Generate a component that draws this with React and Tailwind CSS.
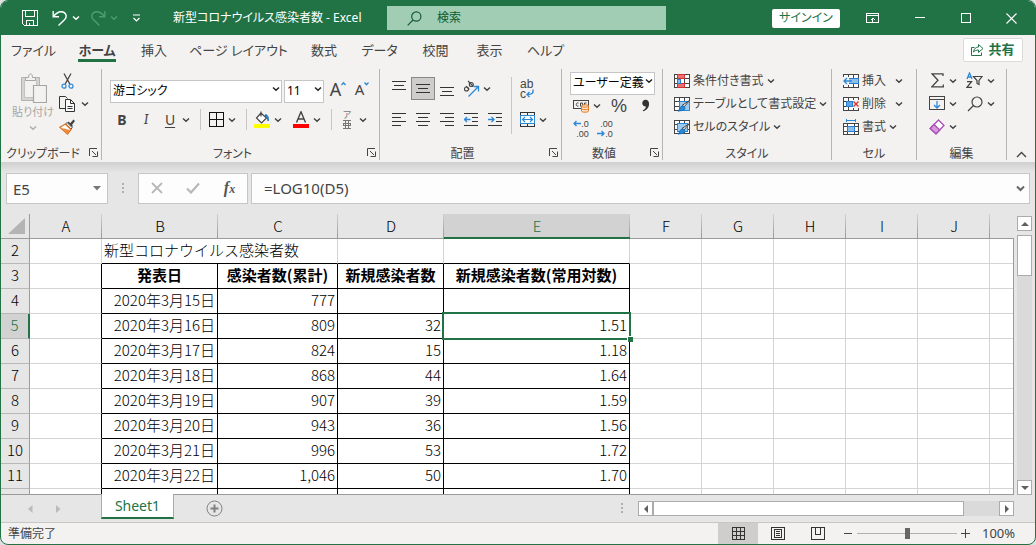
import { useState } from 'react';
import clsx from 'clsx';

const menuTabs = [
  { label: 'ファイル', width: 'w-[65px]' },
  { label: 'ホーム', width: 'w-[62px]', active: true },
  { label: '挿入', width: 'w-[52px]' },
  { label: 'ページ レイアウト', width: 'w-[117px]' },
  { label: '数式', width: 'w-[54px]' },
  { label: 'データ', width: 'w-[57px]' },
  { label: '校閲', width: 'w-[55px]' },
  { label: '表示', width: 'w-[53px]' },
  { label: 'ヘルプ', width: 'w-[59px]' },
];

const columns = [
  { name: 'A', width: 'w-[72px]' },
  { name: 'B', width: 'w-[116px]' },
  { name: 'C', width: 'w-[120px]' },
  { name: 'D', width: 'w-[106px]' },
  { name: 'E', width: 'w-[186px]' },
  { name: 'F', width: 'w-[72px]' },
  { name: 'G', width: 'w-[72px]' },
  { name: 'H', width: 'w-[72px]' },
  { name: 'I', width: 'w-[72px]' },
  { name: 'J', width: 'w-[72px]' },
];

const records = [
  { row: 4, date: '2020年3月15日', total: '777', added: '', log: '' },
  { row: 5, date: '2020年3月16日', total: '809', added: '32', log: '1.51' },
  { row: 6, date: '2020年3月17日', total: '824', added: '15', log: '1.18' },
  { row: 7, date: '2020年3月18日', total: '868', added: '44', log: '1.64' },
  { row: 8, date: '2020年3月19日', total: '907', added: '39', log: '1.59' },
  { row: 9, date: '2020年3月20日', total: '943', added: '36', log: '1.56' },
  { row: 10, date: '2020年3月21日', total: '996', added: '53', log: '1.72' },
  { row: 11, date: '2020年3月22日', total: '1,046', added: '50', log: '1.70' },
  { row: 12, date: '', total: '', added: '', log: '' },
];

function Svg({ w = 16, h = 16, children, ...rest }) {
  return (
    <svg width={w} height={h} viewBox={`0 0 ${w} ${h}`} fill="none" stroke="#444" className="shrink-0" aria-hidden="true" {...rest}>
      {children}
    </svg>
  );
}

function Chevron({ color = '#444' }) {
  return (
    <Svg w={8} h={6} stroke={color} strokeWidth="1.5">
      <path d="M1 1.5 4 4.2 7 1.5" />
    </Svg>
  );
}

function IconButton({ label, children, active, className }) {
  return (
    <button
      type="button"
      aria-label={label}
      className={clsx(
        'flex h-[23px] w-6 shrink-0 items-center justify-center',
        active && 'border border-[#8a8886] bg-[#cfcdcb]',
        className,
      )}
    >
      {children}
    </button>
  );
}

function SplitButton({ label, children }) {
  return (
    <div className="flex shrink-0">
      <IconButton label={label}>{children}</IconButton>
      <button type="button" aria-label={`${label} メニュー`} className="flex h-[23px] w-3 items-center">
        <Chevron />
      </button>
    </div>
  );
}

function TextCommand({ label, icon, wide }) {
  return (
    <button type="button" className="flex h-[23px] items-center gap-[3px] whitespace-nowrap">
      {icon}
      <span>{label}</span>
      <span className={clsx(wide && 'ml-1.5')}>
        <Chevron />
      </span>
    </button>
  );
}

function Combo({ label, value, className }) {
  return (
    <div className={clsx('relative h-[23px] shrink-0', className)}>
      <select
        aria-label={label}
        defaultValue={value}
        className="h-full w-full appearance-none border border-[#c6c6c6] bg-white pl-0.5 text-xs leading-5 text-black"
      >
        <option>{value}</option>
      </select>
      <span className="pointer-events-none absolute inset-y-0 right-0.5 flex items-center">
        <Chevron color="#222" />
      </span>
    </div>
  );
}

function Launcher({ label }) {
  return (
    <button type="button" aria-label={label} className="flex w-4 items-center justify-center">
      <Svg w={9} h={9}>
        <path d="M.5 8V.5H8M3 3l4 4M8.5 3.5v5h-5" />
      </Svg>
    </button>
  );
}

function Group({ title, className, launcher, children }) {
  return (
    <section aria-label={title} className={clsx('flex h-[91px] shrink-0 flex-col border-r border-[#b8b6b4]', className)}>
      <div className="flex-1">{children}</div>
      <div className="flex h-4 text-xs leading-5">
        <span className="flex-1 text-center">{title}</span>
        {launcher && <Launcher label={`${title}の設定`} />}
      </div>
    </section>
  );
}

function Divider() {
  return <span className="mr-[3px] ml-1.5 h-[21px] w-px bg-[#c8c6c4]" />;
}

function Lines({ rows, y = 1 }) {
  return (
    <Svg w={15} h={15} stroke="#333" shapeRendering="crispEdges">
      {rows.map(([x, len], i) => (
        <path key={i} d={`M${x} ${y + i * 4 + 0.5}h${len}`} />
      ))}
    </Svg>
  );
}

/* ---- title bar ---- */

function TitleBar() {
  return (
    <header className="flex h-[34px] shrink-0 items-center bg-[#217346] text-white">
      <div className="flex items-center pl-[21px]">
        <button type="button" aria-label="上書き保存">
          <Svg stroke="#fff" shapeRendering="crispEdges">
            <path d="M.5.5h15v15H2.5l-2-2zM3.5.5v6h9v-6M4.5 15.5v-5h7v5M7.5 13v2.5" />
          </Svg>
        </button>
        <button type="button" aria-label="元に戻す" className="ml-3.5 flex items-center gap-1">
          <Svg stroke="#fff" strokeWidth="1.4">
            <path d="M1.2 1v5.8H7M1.5 6.5C4 3.2 6.5 1.5 9.5 1.7c4.6.3 6 4.7 3.2 7.8L6.5 15.5" />
          </Svg>
          <Chevron color="#fff" />
        </button>
        <button type="button" aria-label="やり直し" disabled className="ml-2.5 flex items-center gap-1">
          <Svg stroke="#4f9a70" strokeWidth="1.4">
            <path d="M14.8 1v5.8H9M14.5 6.5C12 3.2 9.5 1.5 6.5 1.7 1.9 2 .5 6.4 3.3 9.5l6.2 6" />
          </Svg>
          <Chevron color="#4f9a70" />
        </button>
        <button type="button" aria-label="クイック アクセス ツール バーのユーザー設定" className="ml-3.5">
          <Svg w={9} h={8} stroke="#fff" strokeWidth="1.2">
            <path d="M1 1h7M1.5 4l3 3 3-3" />
          </Svg>
        </button>
      </div>
      <h1 className="ml-8 w-[214px] text-xs whitespace-nowrap">新型コロナウイルス感染者数 - Excel</h1>
      <label className="flex h-6 w-[279px] items-center gap-[15px] bg-[#a0cdb4] pl-5">
        <Svg w={15} h={15} stroke="#185c37" strokeWidth="1.2">
          <circle cx="9.3" cy="5.5" r="4.6" />
          <path d="M6 9 .7 14.3" />
        </Svg>
        <input
          type="text"
          aria-label="検索"
          placeholder="検索"
          className="min-w-0 flex-1 bg-transparent text-xs text-[#0e5c2f] outline-none placeholder:text-[#0e5c2f]"
        />
      </label>
      <div className="ml-auto flex items-center">
        <button type="button" className="h-[19px] w-[68px] rounded-xs bg-white text-xs leading-[18px] text-[#217346]">
          サインイン
        </button>
        <button type="button" aria-label="リボンの表示オプション" className="ml-5 flex w-6 justify-center">
          <Svg w={13} h={10} stroke="#fff" shapeRendering="crispEdges">
            <path d="M.5.5h12v9H.5zM.5 2.5h12M6.5 9V4.5M4.5 6.5h1M7.5 6.5h1M5.5 5.5h2" />
          </Svg>
        </button>
        <button type="button" aria-label="最小化" className="flex w-[46px] justify-end pr-[5px]">
          <Svg w={10} h={10} stroke="#fff" shapeRendering="crispEdges">
            <path d="M0 4.5h10" />
          </Svg>
        </button>
        <button type="button" aria-label="最大化" className="flex w-[46px] justify-end pr-[5px]">
          <Svg w={10} h={10} stroke="#fff" shapeRendering="crispEdges">
            <path d="M.5.5h9v9h-9z" />
          </Svg>
        </button>
        <button type="button" aria-label="閉じる" className="mr-[13px] flex w-[46px] justify-end pr-[5px]">
          <Svg w={11} h={11} stroke="#fff" strokeWidth="1.1">
            <path d="m.5.5 10 10M10.5.5l-10 10" />
          </Svg>
        </button>
      </div>
    </header>
  );
}

function MenuTabs() {
  return (
    <nav className="flex h-[33px] shrink-0 items-center text-[13px]">
      {menuTabs.map((tab) => (
        <button
          key={tab.label}
          type="button"
          className={clsx('flex h-full shrink-0 justify-center pt-1.5 leading-[18px] whitespace-nowrap', tab.width)}
        >
          <span className={clsx('h-[21px]', tab.active && 'border-b-[3px] border-[#217346] font-bold')}>{tab.label}</span>
        </button>
      ))}
      <button
        type="button"
        className="mr-3 mb-1 ml-auto flex h-6 w-[60px] items-center justify-center gap-1 rounded-xs border border-[#dcdad8] bg-white font-bold text-[#217346]"
      >
        <Svg w={13} h={13} stroke="#217346">
          <path d="M3.5 4.5h-3v8h10v-3M2.5 9C3 5.5 5 4 7.5 4V1.5l4.5 4-4.5 4V7C5.5 7 4 7.5 2.5 9z" />
        </Svg>
        共有
      </button>
    </nav>
  );
}

/* ---- ribbon groups ---- */

function ClipboardGroup() {
  return (
    <Group title="クリップボード" launcher className="w-[101px]">
      <div className="flex">
        <button type="button" disabled className="flex w-[58px] flex-col items-center pt-1 pl-1.5 text-[11px] leading-[18px] whitespace-nowrap text-[#a8a6a4]">
          <Svg w={27} h={30} stroke="#a8a6a4">
            <path d="M1.5 4.5h18v23h-18z" fill="#d6d4d2" stroke="#b4b2b0" />
            <path d="M4.5 7.5h12v17h-12z" fill="#f3f2f1" stroke="#c4c2c0" />
            <path d="M5.5 7.5v-3h3c0-5 4-5 4 0h3v3z" fill="#f3f1ef" />
            <path d="M13.5 12.5h13v17h-13z" fill="#f3f2f1" strokeWidth="1.2" />
          </Svg>
          貼り付け
          <span className="pt-1">
            <Chevron color="#b0aeac" />
          </span>
        </button>
        <div className="flex flex-col">
          <button type="button" aria-label="切り取り" className="flex h-[23px] items-center pl-0.5">
            <Svg w={13} h={16}>
              <path d="m3 .5 5.8 10.5M10 .5 4.2 11" strokeWidth="1.3" />
              <circle cx="3" cy="13.2" r="2" stroke="#2b88d8" strokeWidth="1.2" />
              <circle cx="10" cy="13.2" r="2" stroke="#2b88d8" strokeWidth="1.2" />
            </Svg>
          </button>
          <button type="button" aria-label="コピー" className="flex h-[23px] items-center gap-1.5">
            <Svg stroke="#333">
              <path d="M6.5 12.5h-6V.5h6l2 2" />
              <path d="M6.5 3.5h5l4 4v8h-9zM11.5 3.5v4h4M8.5 10.5h5M8.5 12.5h5" fill="#fafafa" />
            </Svg>
            <Chevron />
          </button>
          <button type="button" aria-label="書式のコピー" className="flex h-6 items-center">
            <Svg>
              <path d="m15 1-3.5 4M9 3l4.5 4.5M15.5 1.5 12 6" strokeWidth="1.5" />
              <path d="m8 3.5 5.2 5.2-1.2 1.3-5.2-5.2z" fill="#fff" />
              <path d="M6.5 5 12 10.5 8.5 15 .8 8.2z" fill="#fff" stroke="#e07020" strokeWidth="1.3" />
              <path d="m5 9.5 6 1.5-2.5 3.8L3 9.3z" fill="#f08a3c" stroke="none" />
            </Svg>
          </button>
        </div>
      </div>
    </Group>
  );
}

function FontGroup() {
  return (
    <Group title="フォント" launcher className="w-[278px]">
      <div className="flex flex-col gap-2 px-2 pt-2">
        <div className="flex gap-0.5">
          <Combo label="フォント" value="游ゴシック" className="w-[172px]" />
          <Combo label="フォント サイズ" value="11" className="w-10" />
          <div className="flex">
            <IconButton label="フォント サイズの拡大">
              <span className="text-lg leading-5">A</span>
              <Svg w={5} h={16} stroke="#2b88d8" strokeWidth="1.3">
                <path d="m.5 4 2-2.2 2 2.2" />
              </Svg>
            </IconButton>
            <IconButton label="フォント サイズの縮小">
              <span className="text-[15px] leading-5">A</span>
              <Svg w={5} h={16} stroke="#2b88d8" strokeWidth="1.3">
                <path d="m.5 1.5 2 2.2 2-2.2" />
              </Svg>
            </IconButton>
          </div>
        </div>
        <div className="flex items-center text-sm">
          <IconButton label="太字" className="font-bold">B</IconButton>
          <IconButton label="斜体" className="font-serif italic">I</IconButton>
          <SplitButton label="下線">
            <span className="underline underline-offset-2">U</span>
          </SplitButton>
          <Divider />
          <SplitButton label="罫線">
            <Svg w={15} h={15} stroke="#111" shapeRendering="crispEdges">
              <path d="M.5.5h14v14H.5zM7.5 0v15M0 7.5h15" />
            </Svg>
          </SplitButton>
          <Divider />
          <div className="flex gap-[3px]">
            <SplitButton label="塗りつぶしの色">
              <Svg h={17}>
                <path d="M7 2 2.5 7l5 5 5-5L7 2zM7 .5v5" fill="#fff" strokeWidth="1.2" />
                <path d="M11.5 3.5c2.5.5 3.2 3 2.7 6.5-.4-2-1.2-3.500-2.700-4z" fill="#2b88d8" stroke="#1b6fb8" />
                <path d="M0 13h16v4H0z" fill="#ff0" stroke="none" />
              </Svg>
            </SplitButton>
            <SplitButton label="フォントの色">
              <Svg h={17}>
                <path d="M3.5 11.5 8 .8l4.5 10.7M5 8h6" strokeWidth="1.4" />
                <path d="M0 13h16v4H0z" fill="#f00" stroke="none" />
              </Svg>
            </SplitButton>
          </div>
          <Divider />
          <SplitButton label="ふりがな">
            <span className="flex flex-col items-center text-[9px] leading-[10px] text-[#777]">
              <span>ア</span>
              <Svg w={8} h={9} stroke="#777" shapeRendering="crispEdges">
                <path d="M0 .5h8M2.5 1v7M5.5 1v7M.5 3.5h7v2h-7zM0 8.5h8" />
              </Svg>
            </span>
          </SplitButton>
        </div>
      </div>
    </Group>
  );
}

function AlignmentGroup() {
  const full = [0, 14];
  return (
    <Group title="配置" launcher className="w-[182px]">
      <div className="flex pt-2 pl-[7px]">
        <div className="flex w-[120px] flex-col gap-2">
          <div className="flex">
            <IconButton label="上揃え">
              <Lines rows={[full, [2, 10], full]} y={0} />
            </IconButton>
            <IconButton label="上下中央揃え" active>
              <Lines rows={[full, [2, 10], full]} y={3} />
            </IconButton>
            <IconButton label="下揃え">
              <Lines rows={[full, [2, 10], full]} y={6} />
            </IconButton>
            <SplitButton label="方向">
              <Svg w={18} h={18}>
                <g strokeWidth="1.1">
                  <circle cx="4.5" cy="9" r="2" />
                  <path d="m4 6.2 3.3 3.3M6 1l5 5" />
                  <circle cx="9.3" cy="4.5" r="2" />
                </g>
                <path d="M6.500 16.500 16 7M11.500 6.500h5v5" stroke="#2b88d8" strokeWidth="1.3" />
              </Svg>
            </SplitButton>
          </div>
          <div className="flex">
            <IconButton label="左揃え">
              <Lines rows={[full, [0, 9], full, [0, 9]]} />
            </IconButton>
            <IconButton label="中央揃え">
              <Lines rows={[full, [2, 10], full, [2, 10]]} />
            </IconButton>
            <IconButton label="右揃え">
              <Lines rows={[full, [5, 9], full, [5, 9]]} />
            </IconButton>
            <IconButton label="インデントを減らす">
              <Svg w={15} h={15} stroke="#333">
                <path d="M0 1.5h14M8 5.5h6M8 9.5h6M0 13.5h14" shapeRendering="crispEdges" />
                <path d="M6.5 7.5h-6M3 5 .5 7.5 3 10" stroke="#2b88d8" strokeWidth="1.3" />
              </Svg>
            </IconButton>
            <IconButton label="インデントを増やす">
              <Svg w={15} h={15} stroke="#333">
                <path d="M0 1.5h14M8 5.5h6M8 9.5h6M0 13.5h14" shapeRendering="crispEdges" />
                <path d="M0 7.5h6M3.5 5 6 7.5 3.5 10" stroke="#2b88d8" strokeWidth="1.3" />
              </Svg>
            </IconButton>
          </div>
        </div>
        <span className="mr-[3px] ml-1 h-[57px] w-px bg-[#c8c6c4]" />
        <div className="flex flex-col gap-2">
          <IconButton label="折り返して全体を表示する">
            <span className="flex flex-col items-start font-['Liberation_Sans',sans-serif] text-xs leading-[10px]">
              <span>ab</span>
              <span className="flex">
                c
                <Svg w={8} h={9} stroke="#2b88d8" strokeWidth="1.4">
                  <path d="M7 .5c.5 4-1 5-6 5M3.5 3 1 5.5 3.5 8" />
                </Svg>
              </span>
            </span>
          </IconButton>
          <SplitButton label="セルを結合して中央揃え">
            <Svg w={15} h={15} stroke="#333">
              <path d="M.5.5h14v14H.5zM7.5 0v4M7.5 11v4" shapeRendering="crispEdges" />
              <path d="M.5 3.5h14v8H.5z" fill="#fff" stroke="#2b88d8" shapeRendering="crispEdges" />
              <path d="M2.5 7.5h10M5 5 2.5 7.5 5 10M10 5l2.5 2.5L10 10" stroke="#2b88d8" strokeWidth="1.2" />
            </Svg>
          </SplitButton>
        </div>
      </div>
    </Group>
  );
}

function DecimalIcon({ more }) {
  return (
    <span className="flex flex-col items-end font-['Liberation_Sans',sans-serif] text-[9px] leading-[10px]">
      <span className="flex items-center">
        {more && (
          <Svg w={8} h={7} stroke="#2b88d8" strokeWidth="1.3">
            <path d="M8 3.5H1M3.5 1 1 3.5 3.5 6" />
          </Svg>
        )}
        {more ? '.0' : '.00'}
      </span>
      <span className="flex items-center">
        {!more && (
          <Svg w={8} h={7} stroke="#2b88d8" strokeWidth="1.3">
            <path d="M0 3.5h7M4.5 1 7 3.5 4.5 6" />
          </Svg>
        )}
        {more ? '.00' : '.0'}
      </span>
    </span>
  );
}

function NumberGroup() {
  return (
    <Group title="数値" launcher className="w-[101px]">
      <div className="flex flex-col pl-[7px]">
        <Combo label="表示形式" value="ユーザー定義" className="ml-px w-[85px]" />
        <div className="flex items-center gap-0.5 pt-0.5">
          <SplitButton label="通貨表示形式">
            <Svg w={17} h={14}>
              <path d="M.5 1.5h15v8H.5z" shapeRendering="crispEdges" />
              <path d="M5.5 4c-3-1-3 4 0 3M7.5 7.5V4h2v3.5M11.5 7.5V4h2" />
              <path d="M8.5 7c0-1.6 7-1.6 7 0v5c0 1.6-7 1.6-7 0z" fill="#fbe3cc" stroke="#e07b20" />
              <path d="M8.5 7c0 1.5 7 1.5 7 0M8.5 9.5c0 1.5 7 1.5 7 0" stroke="#e07b20" />
            </Svg>
          </SplitButton>
          <IconButton label="パーセント スタイル">
            <span className="font-['Liberation_Sans',sans-serif] text-lg leading-5">%</span>
          </IconButton>
          <IconButton label="桁区切りスタイル">
            <Svg w={9} h={13}>
              <path d="M8 4.5c.3 4-2.5 7-6 7.800l-.3-.8c2-1 3-2.300 3.300-4A3.400 3.400 0 1 1 8 4.500z" fill="#333" stroke="none" />
            </Svg>
          </IconButton>
        </div>
        <div className="flex">
          <IconButton label="小数点以下の表示桁数を増やす">
            <DecimalIcon more />
          </IconButton>
          <IconButton label="小数点以下の表示桁数を減らす">
            <DecimalIcon />
          </IconButton>
        </div>
      </div>
    </Group>
  );
}

function GridIcon({ children }) {
  return (
    <Svg stroke="#444" shapeRendering="crispEdges">
      <path d="M.5 1.5h15v13H.5zM0 5.5h16M0 10.5h16M5.5 1v14M10.5 1v14" fill="#fff" />
      {children}
    </Svg>
  );
}

function BrushOverlay() {
  return (
    <g shapeRendering="auto">
      <path d="M15.5 4.5 10 11l-2-1.5z" fill="#fff" stroke="#444" />
      <path d="M9.5 10c2 1 2 4-1 4.5-1.5.3-3 0-4 .8 1-1.5.8-5.3 5-5.300z" fill="#2b88d8" stroke="#1b6fb8" />
    </g>
  );
}

function StyleGroup() {
  return (
    <Group title="スタイル" className="w-[169px]">
      <div className="flex flex-col pl-[11px] text-xs">
        <TextCommand
          label="条件付き書式"
          icon={
            <GridIcon>
              <path d="M3.5 1.5h7v4h-7zM3.5 10.5h7v4h-7z" fill="#f07070" stroke="#d13438" />
              <path d="M3.5 6h3v4h-3z" fill="#8cc0ea" stroke="#2b7cd3" />
            </GridIcon>
          }
        />
        <TextCommand
          label="テーブルとして書式設定"
          icon={
            <GridIcon>
              <path d="M5.5 5.5h10v9h-10z" fill="#9ccbf0" stroke="#2b88d8" />
              <BrushOverlay />
            </GridIcon>
          }
        />
        <TextCommand
          label="セルのスタイル"
          icon={
            <GridIcon>
              <path d="M3.5 4.5h10v8h-10z" fill="#9ccbf0" stroke="#2b88d8" />
              <BrushOverlay />
            </GridIcon>
          }
        />
      </div>
    </Group>
  );
}

function CellsGroup() {
  return (
    <Group title="セル" className="w-[85px]">
      <div className="flex flex-col pl-[11px] text-xs">
        <TextCommand
          label="挿入"
          wide
          icon={
            <GridIcon>
              <path d="M5.5 5.5h10v5h-10z" fill="#8cc0ea" stroke="#2b7cd3" />
              <path d="M0 4h6v8H0z" fill="#f3f2f1" stroke="none" />
              <path d="M9 8H1M4 5 1 8l3 3" stroke="#2b88d8" strokeWidth="1.3" shapeRendering="auto" />
            </GridIcon>
          }
        />
        <TextCommand
          label="削除"
          wide
          icon={
            <GridIcon>
              <path d="M9 4h7v8H9z" fill="#f3f2f1" stroke="none" />
              <path d="M3.5 5.5h6v5h-6z" fill="#5aa5e2" stroke="#2b7cd3" />
              <path d="m10.5 5.5 5 5M15.5 5.5l-5 5" stroke="#e03c31" strokeWidth="1.5" shapeRendering="auto" />
            </GridIcon>
          }
        />
        <TextCommand
          label="書式"
          icon={
            <Svg shapeRendering="crispEdges">
              <path d="M.5 4.5h15v11H.5zM0 7.5h16M0 12.5h16M4.5 4v12M11.5 4v12" fill="#fff" />
              <path d="M4.5 7.5h7v5h-7z" fill="#8cc0ea" stroke="#2b7cd3" />
              <path d="M3.5 0v3M12.5 0v3M3.5 1.5h9" stroke="#2b88d8" />
            </Svg>
          }
        />
      </div>
    </Group>
  );
}

function EditingGroup() {
  return (
    <Group title="編集" className="w-[90px]">
      <div className="grid grid-cols-2 pr-1.5 pl-2">
        <SplitButton label="合計">
          <Svg w={13} h={15} strokeWidth="1.3">
            <path d="M12 3V.8H1l6 6.5-6.2 6.5h11.5v-2.3" />
          </Svg>
        </SplitButton>
        <SplitButton label="並べ替えとフィルター">
          <Svg w={17} h={17}>
            <path d="M1 7 3.5 1 6 7M2 5h3" stroke="#2b88d8" strokeWidth="1.3" />
            <path d="M1 9.7h4.5L1 15.3h5" strokeWidth="1.3" />
            <path d="M7.5 4.5H16l-3 4v4l-2-1v-3z" strokeWidth="1.2" />
          </Svg>
        </SplitButton>
        <SplitButton label="フィル">
          <Svg h={15}>
            <path d="M.5.5h15v13H.5zM0 3.5h16" shapeRendering="crispEdges" />
            <path d="M8 5v7M5 9l3 3 3-3" stroke="#2b88d8" strokeWidth="1.3" />
          </Svg>
        </SplitButton>
        <SplitButton label="検索と選択">
          <Svg strokeWidth="1.2">
            <circle cx="10" cy="6" r="5" />
            <path d="M6.5 9.5 1 15" />
          </Svg>
        </SplitButton>
        <SplitButton label="クリア">
          <Svg stroke="#a84db5" strokeWidth="1.3">
            <path d="M9.5 1 15 6.5 7 14.8 1.2 9.5z" fill="#fff" />
            <path d="m5 5.5 5.8 5.5L7 14.8 1.2 9.5z" fill="#d59bdc" />
          </Svg>
        </SplitButton>
      </div>
    </Group>
  );
}

function Ribbon() {
  return (
    <div className="flex h-[94px] shrink-0 overflow-hidden pt-px text-[#444]">
      <ClipboardGroup />
      <FontGroup />
      <AlignmentGroup />
      <NumberGroup />
      <StyleGroup />
      <CellsGroup />
      <EditingGroup />
      <button type="button" aria-label="リボンを折りたたむ" className="ml-auto flex items-end pr-2 pb-1">
        <Svg w={11} h={7} strokeWidth="1.4">
          <path d="M1 6 5.5 1.5 10 6" />
        </Svg>
      </button>
    </div>
  );
}

function Dots() {
  return (
    <Svg w={3} h={11} stroke="none" fill="#b0b0b0">
      <path d="M0 0h2v2H0zM0 4h2v2H0zM0 8h2v2H0z" />
    </Svg>
  );
}

function FormulaBar() {
  const [formula, setFormula] = useState('=LOG10(D5)');

  return (
    <div className="flex h-[52px] shrink-0 items-center bg-linear-to-b from-[#cfcfcf] to-[#e6e6e6] to-20% px-[5px] text-[15px] text-[#444]">
      <div className="flex h-[31px] w-[102px] items-center border border-[#c6c6c6] bg-[#fdfdfd] px-1.5">
        <input type="text" aria-label="名前ボックス" defaultValue="E5" className="min-w-0 flex-1 bg-transparent pt-0.5 outline-none" />
        <Svg w={8} h={5} fill="#777" stroke="none">
          <path d="M0 0h8L4 4.5z" />
        </Svg>
      </div>
      <div className="flex w-[30px] justify-center">
        <Dots />
      </div>
      <div className="flex h-[31px] w-[110px] items-center justify-around border border-[#c6c6c6] bg-[#fdfdfd]">
        <button type="button" aria-label="キャンセル">
          <Svg w={12} h={12} stroke="#b8b8b8" strokeWidth="1.8">
            <path d="m1 1 10 10M11 1 1 11" />
          </Svg>
        </button>
        <button type="button" aria-label="入力">
          <Svg w={14} h={12} stroke="#b8b8b8" strokeWidth="2.2">
            <path d="m1 6.5 4 4L13 1.5" />
          </Svg>
        </button>
        <button type="button" aria-label="関数の挿入" className="font-['Liberation_Serif',serif] text-base leading-5 font-bold text-[#555] italic">
          f<span className="text-xs">x</span>
        </button>
      </div>
      <div className="ml-[3px] flex h-[31px] flex-1 items-center border border-[#c6c6c6] bg-[#fdfdfd] pr-1 pl-3">
        <input
          type="text"
          aria-label="数式バー"
          value={formula}
          onChange={(e) => setFormula(e.target.value)}
          className="min-w-0 flex-1 bg-transparent outline-none"
        />
        <Svg w={9} h={7} stroke="#666" strokeWidth="2">
          <path d="m1 1.5 3.5 3.5L8 1.5" />
        </Svg>
      </div>
    </div>
  );
}

/* ---- sheet ---- */

function RowHeader({ row }) {
  return (
    <th
      scope="row"
      className={clsx(
        'h-[25px] border-b border-b-[#b8b8b8] px-0 pt-0 pb-0.5 text-center text-[15px] leading-[22px] font-light',
        row === 5
          ? 'border-r-2 border-r-[#217346] bg-[#d2d2d2] text-[#217346]'
          : 'border-r border-r-[#9b9b9b] bg-[#e6e6e6]',
      )}
    >
      {row < 12 && row}
    </th>
  );
}

function EmptyCells({ count }) {
  return Array.from({ length: count }, (_, i) => (
    <td key={i} className={clsx('border-b border-[#d4d4d4] p-0', i < count - 1 && 'border-r')} />
  ));
}

const boxed = 'border-r border-b border-black px-0.5 pt-0 pb-0.5';

function Sheet() {
  return (
    <div className="min-w-0 flex-1 overflow-hidden">
      <table className="w-full table-fixed border-separate border-spacing-0 font-['Noto_Sans_CJK_JP',sans-serif] font-light text-black">
        <thead>
          <tr className="text-[15px] leading-[22px]">
            <td className="h-[25px] w-[29px] border-r border-b border-[#9b9b9b] p-0">
              <Svg w={28} h={20} stroke="none" fill="#b4b4b4">
                <path d="M24 2v16H7z" />
              </Svg>
            </td>
            {columns.map((col) => (
              <th
                key={col.name}
                scope="col"
                className={clsx(
                  'bg-linear-to-b from-[#d0d0d0] to-[#999] bg-[length:1px_100%] bg-right bg-no-repeat p-0 font-light',
                  col.width,
                  col.name === 'E'
                    ? 'border-b-2 border-[#217346] bg-[#d2d2d2] text-[#217346]'
                    : 'border-b border-[#9b9b9b]',
                )}
              >
                {col.name}
              </th>
            ))}
            <td className="border-b border-[#9b9b9b] p-0" />
          </tr>
        </thead>
        <tbody className="bg-white">
          <tr>
            <RowHeader row={2} />
            <td className="border-r border-b border-[#d4d4d4] p-0" />
            <td
              colSpan={2}
              className="border-r border-b border-r-[#d4d4d4] border-b-black px-0.5 pt-0 pb-0.5 text-[15px] leading-[22px] whitespace-nowrap"
            >
              新型コロナウイルス感染者数
            </td>
            <td className="border-r border-b border-r-[#d4d4d4] border-b-black p-0" />
            <td className="border-r border-b border-r-[#d4d4d4] border-b-black p-0" />
            <EmptyCells count={6} />
          </tr>
          <tr className="text-[15px] leading-[22px] font-bold whitespace-nowrap">
            <RowHeader row={3} />
            <td className="border-r border-b border-r-black border-b-[#d4d4d4] p-0" />
            {['発表日', '感染者数(累計)', '新規感染者数', '新規感染者数(常用対数)'].map((title) => (
              <td key={title} className={clsx(boxed, 'text-center')}>{title}</td>
            ))}
            <EmptyCells count={6} />
          </tr>
          {records.map((r) => (
            <tr key={r.row} className="text-right text-[15px] leading-[22px] whitespace-nowrap">
              <RowHeader row={r.row} />
              <td className="border-r border-b border-r-black border-b-[#d4d4d4] p-0" />
              <td className={boxed}>{r.date}</td>
              <td className={boxed}>{r.total}</td>
              <td className={boxed}>{r.added}</td>
              <td className={clsx(boxed, 'relative')}>
                {r.log}
                {r.row === 5 && (
                  <span className="pointer-events-none absolute -inset-0.5 z-10 border-2 border-[#217346]">
                    <span className="absolute -right-1 -bottom-1 size-1.5 border-t border-l border-white bg-[#217346]" />
                  </span>
                )}
              </td>
              <EmptyCells count={6} />
            </tr>
          ))}
        </tbody>
      </table>
    </div>
  );
}

function ScrollButton({ label, d }) {
  return (
    <button type="button" aria-label={label} className="flex size-[15px] shrink-0 items-center justify-center border border-[#ababab] bg-white">
      <Svg w={8} h={8} fill="#606060" stroke="none">
        <path d={d} />
      </Svg>
    </button>
  );
}

function VerticalScroll() {
  return (
    <div className="mx-[3px] flex w-[15px] flex-col pt-0.5">
      <ScrollButton label="上へスクロール" d="M0 6h8L4 2z" />
      <div className="mt-1 flex-1 bg-[#dadada]">
        <div className="h-[41px] border border-[#ababab] bg-white" />
      </div>
      <ScrollButton label="下へスクロール" d="M0 2h8L4 6z" />
    </div>
  );
}

function SheetTabs() {
  return (
    <div className="flex h-[27px] shrink-0 bg-[#e6e6e6] pr-[21px]">
      <div className="flex w-[100px] items-center gap-[23px] pl-[27px]">
        <button type="button" aria-label="前のシート">
          <Svg w={5} h={8} fill="#bbb" stroke="none">
            <path d="M4.5 0v8L0 4z" />
          </Svg>
        </button>
        <button type="button" aria-label="次のシート">
          <Svg w={5} h={8} fill="#bbb" stroke="none">
            <path d="M0 0v8l4.5-4z" />
          </Svg>
        </button>
      </div>
      <button
        type="button"
        className="relative -mt-px h-[25px] w-[73px] border-x border-b-2 border-x-[#ababab] border-b-[#217346] bg-white text-sm leading-5 text-[#217346]"
      >
        Sheet1
      </button>
      <button type="button" aria-label="新しいシート" className="ml-8 flex items-center">
        <Svg w={17} h={17} stroke="#808080">
          <circle cx="8.5" cy="8.5" r="7.5" />
          <path d="M4.5 8.5h8M8.5 4.5v8" strokeWidth="2" />
        </Svg>
      </button>
      <div className="mr-3.5 ml-auto flex items-center">
        <Dots />
      </div>
      <div className="flex w-[376px] pt-1.5">
        <ScrollButton label="左へスクロール" d="M6 0v8L2 4z" />
        <div className="h-[15px] flex-1 bg-[#dadada]">
          <div className="h-full w-[311px] border border-[#ababab] bg-white" />
        </div>
        <ScrollButton label="右へスクロール" d="M2 0v8l4-4z" />
      </div>
    </div>
  );
}

function StatusBar() {
  const [zoom, setZoom] = useState(100);

  return (
    <footer className="flex h-[22px] shrink-0 items-center border-t border-[#c6c6c6] pl-[7px] text-xs text-[#444]">
      <span>準備完了</span>
      <div className="ml-auto flex h-full">
        <button type="button" aria-label="標準" className="flex w-10 items-center justify-center bg-[#d0cecc]">
          <Svg w={13} h={13} stroke="#333" shapeRendering="crispEdges">
            <path d="M.5.5h12v12H.5zM4.5 0v13M8.5 0v13M0 4.5h13M0 8.5h13" />
          </Svg>
        </button>
        <button type="button" aria-label="ページ レイアウト" className="flex w-10 items-center justify-center">
          <Svg w={14} h={13} stroke="#333" shapeRendering="crispEdges">
            <path d="M.5.5h13v12H.5zM3.5 2.5h7v8h-7zM5 4.5h4M5 6.5h4M5 8.5h4" />
          </Svg>
        </button>
        <button type="button" aria-label="改ページ プレビュー" className="flex w-10 items-center justify-center">
          <Svg w={14} h={13} stroke="#333" shapeRendering="crispEdges">
            <path d="M.5.5h13v12H.5zM4.5 0v7.5h5V0" />
          </Svg>
        </button>
      </div>
      <button type="button" aria-label="縮小" className="ml-1.5">
        <Svg w={9} h={9} shapeRendering="crispEdges">
          <path d="M0 4.5h8" />
        </Svg>
      </button>
      <input
        type="range"
        aria-label="ズーム"
        min="0"
        max="200"
        value={zoom}
        onChange={(e) => setZoom(Number(e.target.value))}
        className="mx-1 h-3 w-[100px] appearance-none bg-linear-to-b from-[#b0b0b0] to-[#b0b0b0] bg-[length:100%_1px] bg-center bg-no-repeat [&::-webkit-slider-thumb]:h-[11px] [&::-webkit-slider-thumb]:w-[5px] [&::-webkit-slider-thumb]:appearance-none [&::-webkit-slider-thumb]:bg-[#666]"
      />
      <button type="button" aria-label="拡大">
        <Svg w={9} h={9} shapeRendering="crispEdges">
          <path d="M0 4.5h9M4.5 0v9" />
        </Svg>
      </button>
      <span className="w-[65px] pl-3 text-[13px]">{zoom}%</span>
    </footer>
  );
}

export default function App() {
  return (
    <div className="h-screen bg-[#dfe1e3]">
      <div className="flex h-full flex-col overflow-hidden rounded-lg border border-[#217346] bg-[#f3f2f1] font-['Noto_Sans','Noto_Sans_CJK_JP',sans-serif] text-[#444] [font-feature-settings:'palt']">
        <TitleBar />
        <MenuTabs />
        <Ribbon />
        <FormulaBar />
        <main className="flex min-h-0 flex-1 bg-[#e6e6e6]">
          <div className="flex min-w-0 flex-1 border-b border-[#9b9b9b] [font-feature-settings:normal]">
            <Sheet />
            <span className="mt-6 w-px bg-[#9b9b9b]" />
          </div>
          <VerticalScroll />
        </main>
        <SheetTabs />
        <StatusBar />
      </div>
    </div>
  );
}
